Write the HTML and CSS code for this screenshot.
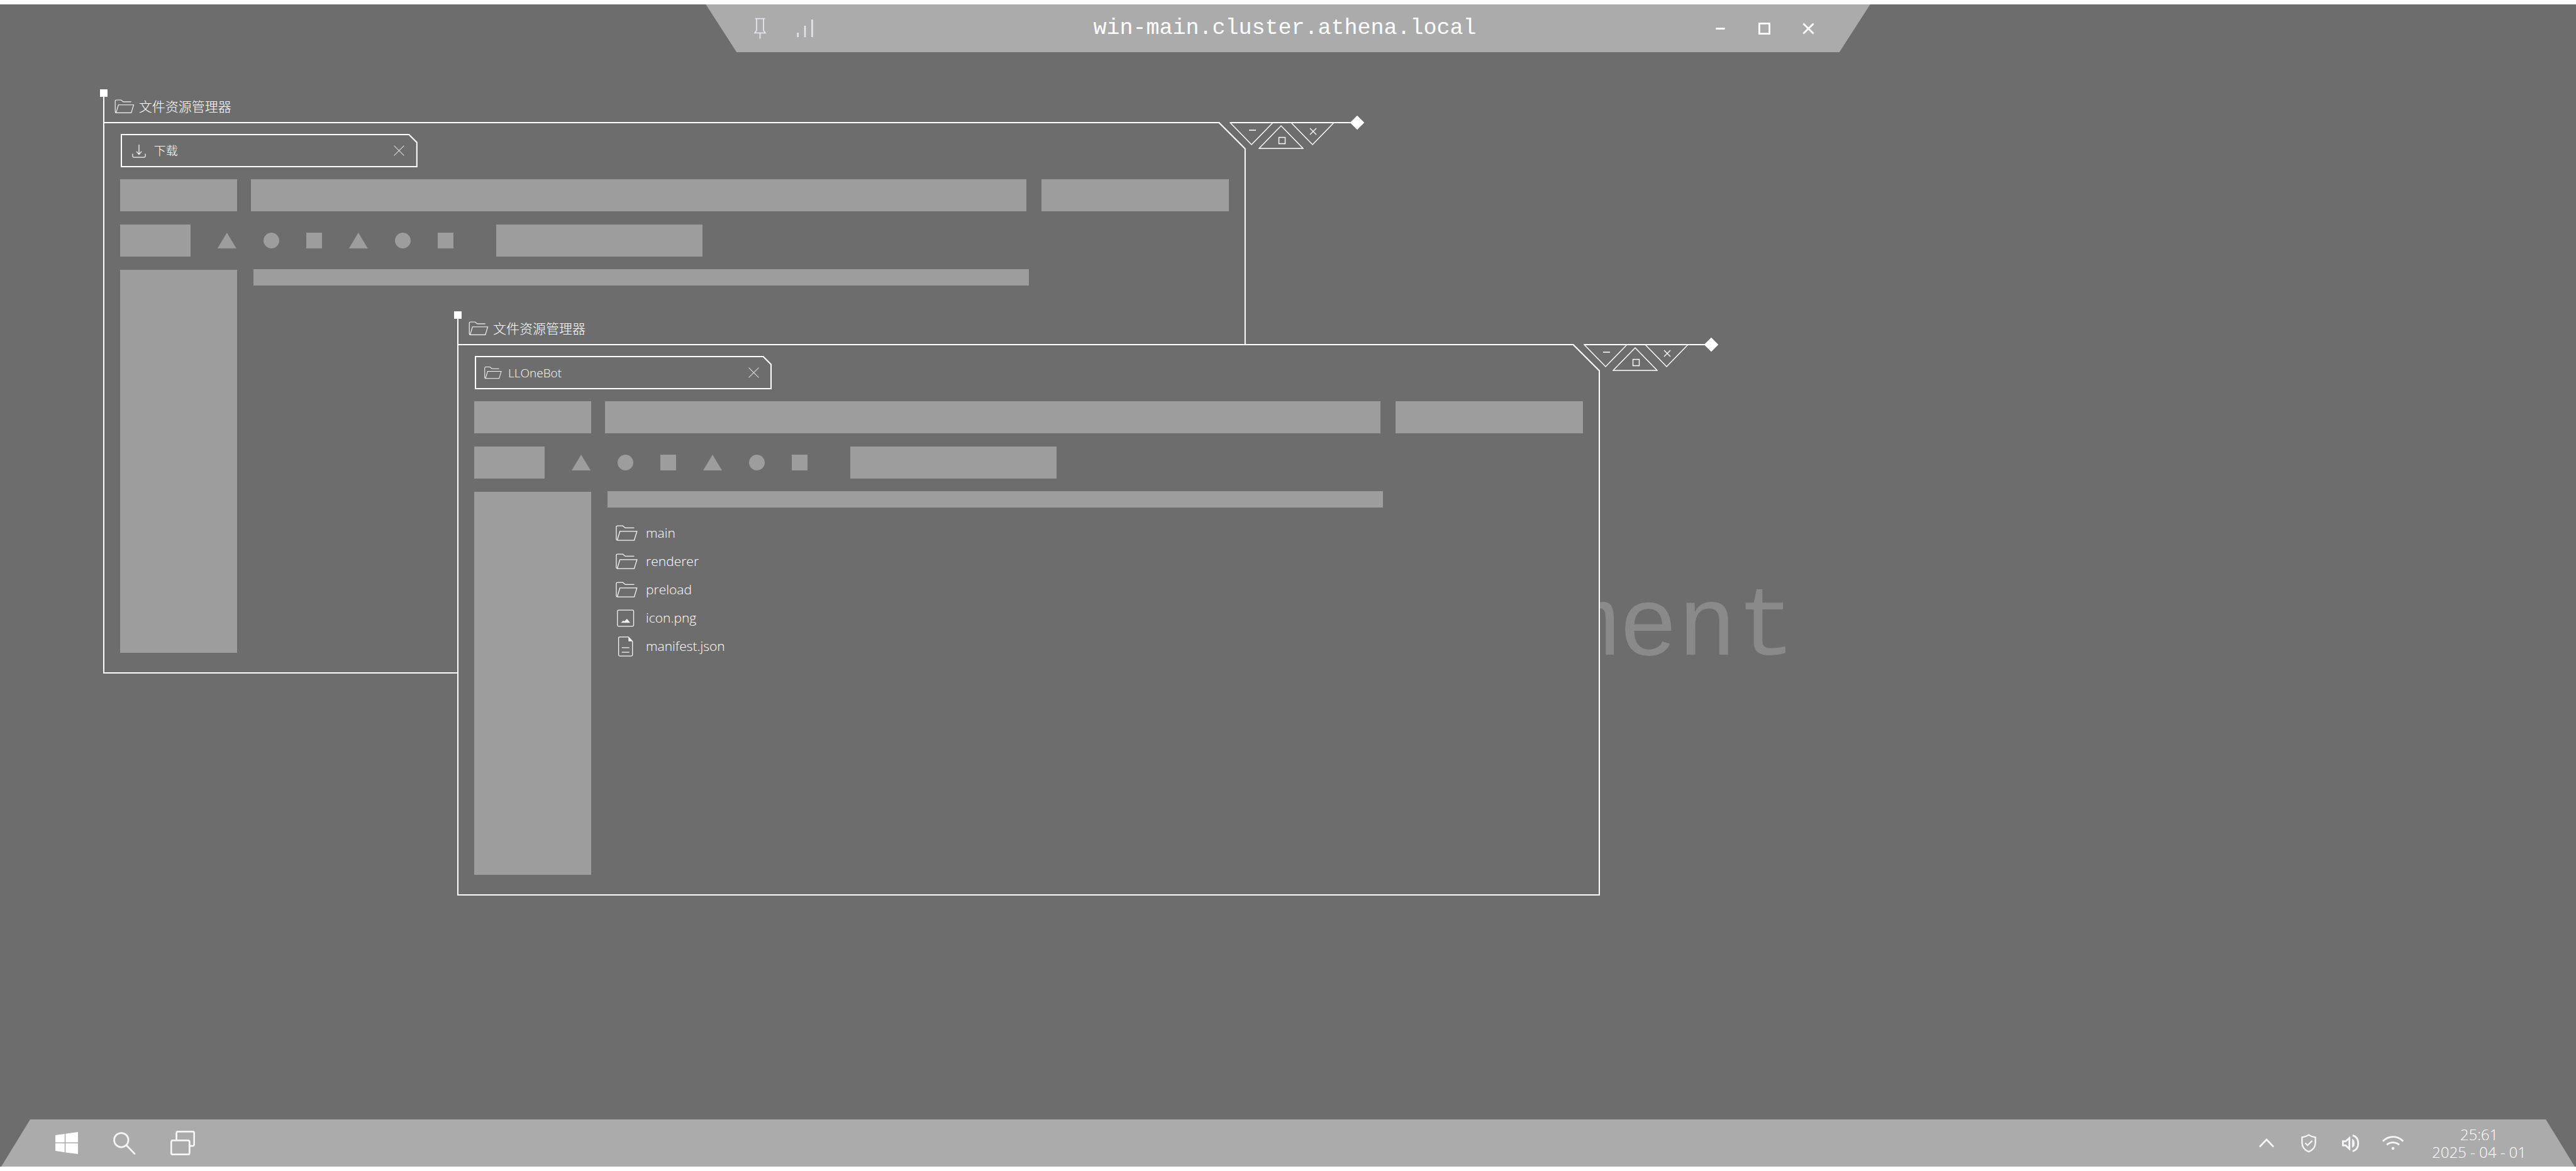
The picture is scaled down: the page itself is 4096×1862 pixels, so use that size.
FILE: index.html
```html
<!DOCTYPE html>
<html lang="zh-CN">
<head>
<meta charset="utf-8">
<title>win-main.cluster.athena.local</title>
<link rel="stylesheet" href="styles.css">
</head>
<body>
<svg class="sprite" aria-hidden="true">
  <symbol id="folder" viewBox="0 0 38 28"><path d="M32 4.7H16.5L12.3 1.2H3.2Q1 1.2 1 3.4V24Q1 26 3 26H32L36.7 10.7H7.2L2.8 25.4"/></symbol>
  <symbol id="cross" viewBox="0 0 16 16"><path d="M.5.5l15 15M15.5.5l-15 15"/></symbol>
</svg>
<div class="screen">
  <header class="session">
    <div class="session-tools">
      <button class="plain" aria-label="Pin"><svg class="pin" viewBox="0 0 20 37"><path d="M1.5 1.8h17M4 2v20L1 26.500h18L16 22V2M10 27v9.500"/></svg></button>
      <button class="plain" aria-label="Signal"><svg class="signal" viewBox="0 0 30 32"><path d="M2 24v8M15 11.500V32M28 0v32"/></svg></button>
    </div>
    <h1 class="session-name">win-main.cluster.athena.local</h1>
    <div class="session-controls">
      <button class="plain" aria-label="Minimize"><svg viewBox="0 0 20 20"><path d="M2.500 10h15"/></svg></button>
      <button class="plain" aria-label="Maximize"><svg viewBox="0 0 20 20"><path d="M1.500 1.500h17v17h-17z"/></svg></button>
      <button class="plain" aria-label="Close"><svg viewBox="0 0 20 20"><path d="M1.500 1.500l17 17M18.500 1.500l-17 17"/></svg></button>
    </div>
  </header>

  <main class="desktop">
    <p class="watermark">ment</p>

    <section class="window window-back">
      <div class="window-title"><svg class="icon-title"><use href="#folder"/></svg><h2>文件资源管理器</h2></div>
      <div class="window-body">
        <div class="tab">
          <svg class="icon-tab" viewBox="0 0 30 24"><path d="M15 1v17M10.500 13l4.500 5 4.500-5M4 17v4q0 2 2 2h18q2 0 2-2v-4"/></svg>
          <span>下载</span>
          <button class="plain" aria-label="Close tab"><svg class="icon-cross"><use href="#cross"/></svg></button>
        </div>
        <div class="bar-row">
          <div class="block nav"></div><div class="block address"></div><div class="block search"></div>
        </div>
        <div class="tool-row">
          <div class="block create"></div>
          <i class="shape triangle"></i><i class="shape circle"></i><i class="shape square"></i>
          <i class="shape triangle"></i><i class="shape circle"></i><i class="shape square"></i>
          <div class="block sort"></div>
        </div>
        <div class="content-row">
          <div class="block sidebar"></div>
          <div class="content"><div class="block columns"></div></div>
        </div>
      </div>
      <div class="window-controls">
        <button class="plain" aria-label="Minimize"><svg viewBox="0 0 70 38"><path d="M1 1h68L35 36zM31 13h11"/></svg></button>
        <button class="plain middle" aria-label="Maximize"><svg viewBox="0 0 72 38"><path d="M36 1l35 36H1zM32.500 19.500h10v10h-10z"/></svg></button>
        <button class="plain" aria-label="Close"><svg viewBox="0 0 70 38"><path d="M1 1h68L35 36zM31 10l10 10M41 10L31 20"/></svg></button>
      </div>
    </section>

    <section class="window window-front">
      <div class="window-title"><svg class="icon-title"><use href="#folder"/></svg><h2>文件资源管理器</h2></div>
      <div class="window-body">
        <div class="tab">
          <svg class="icon-tab"><use href="#folder"/></svg>
          <span>LLOneBot</span>
          <button class="plain" aria-label="Close tab"><svg class="icon-cross"><use href="#cross"/></svg></button>
        </div>
        <div class="bar-row">
          <div class="block nav"></div><div class="block address"></div><div class="block search"></div>
        </div>
        <div class="tool-row">
          <div class="block create"></div>
          <i class="shape triangle"></i><i class="shape circle"></i><i class="shape square"></i>
          <i class="shape triangle"></i><i class="shape circle"></i><i class="shape square"></i>
          <div class="block sort"></div>
        </div>
        <div class="content-row">
          <div class="block sidebar"></div>
          <div class="content">
            <div class="block columns"></div>
            <ul class="files">
              <li><svg><use href="#folder"/></svg>main</li>
              <li><svg><use href="#folder"/></svg>renderer</li>
              <li><svg><use href="#folder"/></svg>preload</li>
              <li><svg viewBox="0 0 38 30"><rect x="3" y="1" width="28" height="28" rx="2"/><path class="solid" d="M9 23l4-4 2 1.500 4.500-4.500 5.500 7z"/></svg>icon.png</li>
              <li><svg class="tall" viewBox="0 0 38 36"><path d="M22 1.500H7q-2 0-2 2v29q0 2 2 2h20q2 0 2-2V9zM10.500 20h13M10.500 28h13"/><path class="solid" d="M22 1.500V9h7z"/></svg>manifest.json</li>
            </ul>
          </div>
        </div>
      </div>
      <div class="window-controls">
        <button class="plain" aria-label="Minimize"><svg viewBox="0 0 70 38"><path d="M1 1h68L35 36zM31 13h11"/></svg></button>
        <button class="plain middle" aria-label="Maximize"><svg viewBox="0 0 72 38"><path d="M36 1l35 36H1zM32.500 19.500h10v10h-10z"/></svg></button>
        <button class="plain" aria-label="Close"><svg viewBox="0 0 70 38"><path d="M1 1h68L35 36zM31 10l10 10M41 10L31 20"/></svg></button>
      </div>
    </section>
  </main>

  <footer class="taskbar">
    <div class="launchers">
      <button class="plain" aria-label="Start"><svg class="start" viewBox="0 0 117 114"><path d="M0 16l48-6v44H0zM53 9l64-9v54H53zM0 59h48v46l-48-7zM53 59h64v55l-64-8z"/></svg></button>
      <button class="plain" aria-label="Search"><svg class="find" viewBox="0 0 116 118"><circle cx="41" cy="42" r="37"/><path d="M67 68l46 48"/></svg></button>
      <button class="plain" aria-label="Task view"><svg class="views" viewBox="0 0 126 126"><rect x="4" y="50" width="94" height="72" rx="8"/><path d="M31 50V12q0-8 8-8h75q8 0 8 8v58q0 8-8 8H98"/></svg></button>
    </div>
    <div class="tray">
      <button class="plain" aria-label="Show hidden icons"><svg class="chevron" viewBox="0 0 26 16"><path d="M1 14.500L13 2l12 12.500"/></svg></button>
      <button class="plain" aria-label="Security"><svg class="shield" viewBox="0 0 26 32"><path d="M13 1.500Q18 5 24.500 5.500V15Q24.500 26 13 30.500 1.500 26 1.500 15V5.500Q8 5 13 1.500zM7 15.500l4 4 8-8"/></svg></button>
      <button class="plain" aria-label="Volume"><svg class="speaker" viewBox="0 0 30 30"><path d="M1.500 11.500H6L12.500 6v18.500L6 18.500H1.500z"/><path d="M18 1.500Q27.500 4 27.500 15T18 28.500"/><path class="solid" d="M17 7.500q4.500 1.500 4.500 7.500T17 22.500z"/></svg></button>
      <button class="plain" aria-label="Network"><svg class="wifi" viewBox="0 0 36 24"><path d="M1 9Q8 1.500 18 1.500T35 9M7.500 15Q12 11 18 11t10.500 4"/><circle class="solid" cx="18" cy="21" r="2.500"/></svg></button>
      <div class="clock"><time>25:61</time><span>2025 - 04 - 01</span></div>
    </div>
  </footer>
</div>
</body>
</html>
```
FILE: styles.css
```css
:root {
  --ground: #6d6d6d;
  --bar: #ababab;
  --block: #9d9d9d;
  --ui: "Open Sans", "Noto Sans CJK SC", sans-serif;
}

* { box-sizing: border-box; }

body {
  margin: 0;
  padding: 7px 0;
  background: #fff;
  color: #fff;
  font-family: var(--ui);
  font-weight: 300;
}

svg { display: block; fill: none; stroke: #f6f6f8; }

.sprite { position: absolute; width: 0; height: 0; }

.plain {
  display: flex;
  align-items: center;
  justify-content: center;
  padding: 0;
  border: 0;
  background: none;
}

.solid { fill: #f2f2f5; stroke: none; }

.screen {
  display: flex;
  flex-direction: column;
  min-height: calc(100vh - 14px);
  background: var(--ground);
}

/* Session bar */
.session {
  display: grid;
  grid-template-columns: 1fr auto 1fr;
  align-items: center;
  align-self: center;
  width: 45.2%;
  height: 76px;
  padding: 0 78px 0 68px;
  background: var(--bar);
  clip-path: polygon(0 0, 100% 0, calc(100% - 49px) 100%, 49px 100%);
}

.session-tools { display: flex; gap: 36px; }
.session-tools .plain { width: 36px; }
.pin { width: 19px; height: 34px; stroke-width: 2; stroke: #e4e4ec; }
.signal { width: 28px; height: 28px; stroke-width: 3; stroke: #e4e4ec; }

.session-name {
  margin: 0;
  font: 400 35px/40px "Liberation Mono", monospace;
}

.session-controls { display: flex; justify-content: flex-end; gap: 30px; }
.session-controls .plain { width: 40px; }
.session-controls svg { width: 19px; height: 19px; stroke: #fff; stroke-width: 3; }

/* Desktop */
.desktop { position: relative; flex: 1; }

.watermark {
  position: absolute;
  top: 839px;
  right: 30.3%;
  margin: 0;
  color: #8a8a8a;
  font: 400 156px/156px "Liberation Mono", monospace;
}

.window { position: absolute; width: 44.36%; }
.window-back { left: 4%; top: 59px; }
.window-front { left: 17.75%; top: 412px; }

.window-title {
  position: relative;
  display: flex;
  align-items: center;
  gap: 7px;
  height: 52px;
  padding: 2px 0 0 16px;
  border-left: 2px solid #fff;
}

.window-title::before {
  content: "";
  position: absolute;
  left: -7px;
  top: 0;
  width: 12px;
  height: 12px;
  background: #fff;
}

.window-title h2 {
  margin: 0;
  font-size: 21px;
  line-height: 28px;
  font-weight: 300;
}

.icon-title { width: 32px; height: 23px; stroke-width: 1.4; }

.window-body {
  position: relative;
  isolation: isolate;
  padding: 19px 27px 33px;
  background: #fff;
  clip-path: polygon(0 0, calc(100% - 42px) 0, 100% 42px, 100% 100%, 0 100%);
}

.window-body::before {
  content: "";
  position: absolute;
  z-index: -1;
  inset: 2px;
  background: var(--ground);
  clip-path: polygon(0 0, calc(100% - 41px) 0, 100% 41px, 100% 100%, 0 100%);
}

.tab {
  position: relative;
  isolation: isolate;
  display: flex;
  align-items: center;
  gap: 10px;
  width: 472px;
  height: 53px;
  margin-left: 1px;
  padding: 0 14px 0 15px;
  background: #fff;
  font-size: 19px;
  line-height: 26px;
  clip-path: polygon(0 0, calc(100% - 13px) 0, 100% 13px, 100% 100%, 0 100%);
}

.tab::before {
  content: "";
  position: absolute;
  z-index: -1;
  inset: 2px;
  background: var(--ground);
  clip-path: polygon(0 0, calc(100% - 12px) 0, 100% 12px, 100% 100%, 0 100%);
}

.tab .plain { width: 30px; height: 30px; margin-left: auto; }
.icon-tab { width: 28px; height: 22px; stroke-width: 1.4; }
.icon-cross { width: 17px; height: 17px; stroke: #dcdce0; stroke-width: 1; }

.block { height: 51px; background: var(--block); }

.bar-row { display: flex; margin-top: 19px; }
.nav { width: 186px; }
.address { flex: 1; margin: 0 24px 0 22px; }
.search { width: 298px; }

.tool-row { display: flex; align-items: center; gap: 43px; margin-top: 21px; }
.create { width: 112px; }
.sort { width: 328px; margin-left: 25px; }

.shape { width: 25px; height: 25px; background: var(--block); }
.circle { border-radius: 50%; }
.triangle { width: 30px; clip-path: polygon(50% 0, 100% 100%, 0 100%); }

.content-row { display: flex; gap: 26px; margin-top: 20px; }
.sidebar { width: 186px; height: 609px; margin-top: 1px; }
.content { flex: 1; }
.columns { width: 79.5%; height: 26px; }

.files {
  margin: 18px 0 0;
  padding: 0 0 0 13px;
  list-style: none;
  font-size: 21px;
  line-height: 45px;
}

.files li { display: flex; align-items: center; gap: 13px; height: 45px; }
.files svg { width: 35px; height: 28px; stroke-width: 1.4; }
.files .tall { height: 34px; }

.window-controls {
  position: absolute;
  left: calc(100% - 26px);
  top: 52px;
  display: flex;
  width: 213px;
}

.window-controls::before {
  content: "";
  position: absolute;
  left: 1px;
  right: 20px;
  top: 0;
  height: 2px;
  background: #fff;
}

.window-controls::after {
  content: "";
  position: absolute;
  right: 2px;
  top: -7px;
  width: 16px;
  height: 16px;
  background: #fff;
  transform: rotate(45deg);
}

.window-controls .plain { width: 70px; height: 38px; flex: none; }
.window-controls .middle { width: 72px; margin: 5px -21px 0 -24px; }
.window-controls svg { width: 100%; height: 38px; stroke: #fff; stroke-width: 1.4; }

/* Taskbar */
.taskbar {
  display: flex;
  justify-content: space-between;
  height: 75px;
  padding: 0 79px 0 60px;
  background: var(--bar);
  clip-path: polygon(48px 0, calc(100% - 48px) 0, calc(100% - 2px) 100%, 2px 100%);
}

.launchers, .tray { display: flex; align-items: center; }
.launchers .plain { width: 92px; height: 60px; }
.tray .plain { width: 67px; height: 60px; }

.start { width: 36px; height: 35px; fill: #fff; stroke: none; }
.find { width: 36px; height: 36px; stroke-width: 9; }
.views { width: 39px; height: 39px; stroke-width: 9; }
.chevron { width: 24px; height: 15px; stroke-width: 3; }
.shield { width: 24px; height: 30px; stroke-width: 2.5; }
.speaker { width: 28px; height: 28px; stroke-width: 3; }
.wifi { width: 34px; height: 23px; stroke-width: 3; }

.clock {
  display: flex;
  flex-direction: column;
  align-items: center;
  margin-left: 29px;
  font-size: 24px;
  line-height: 28px;
}
```
